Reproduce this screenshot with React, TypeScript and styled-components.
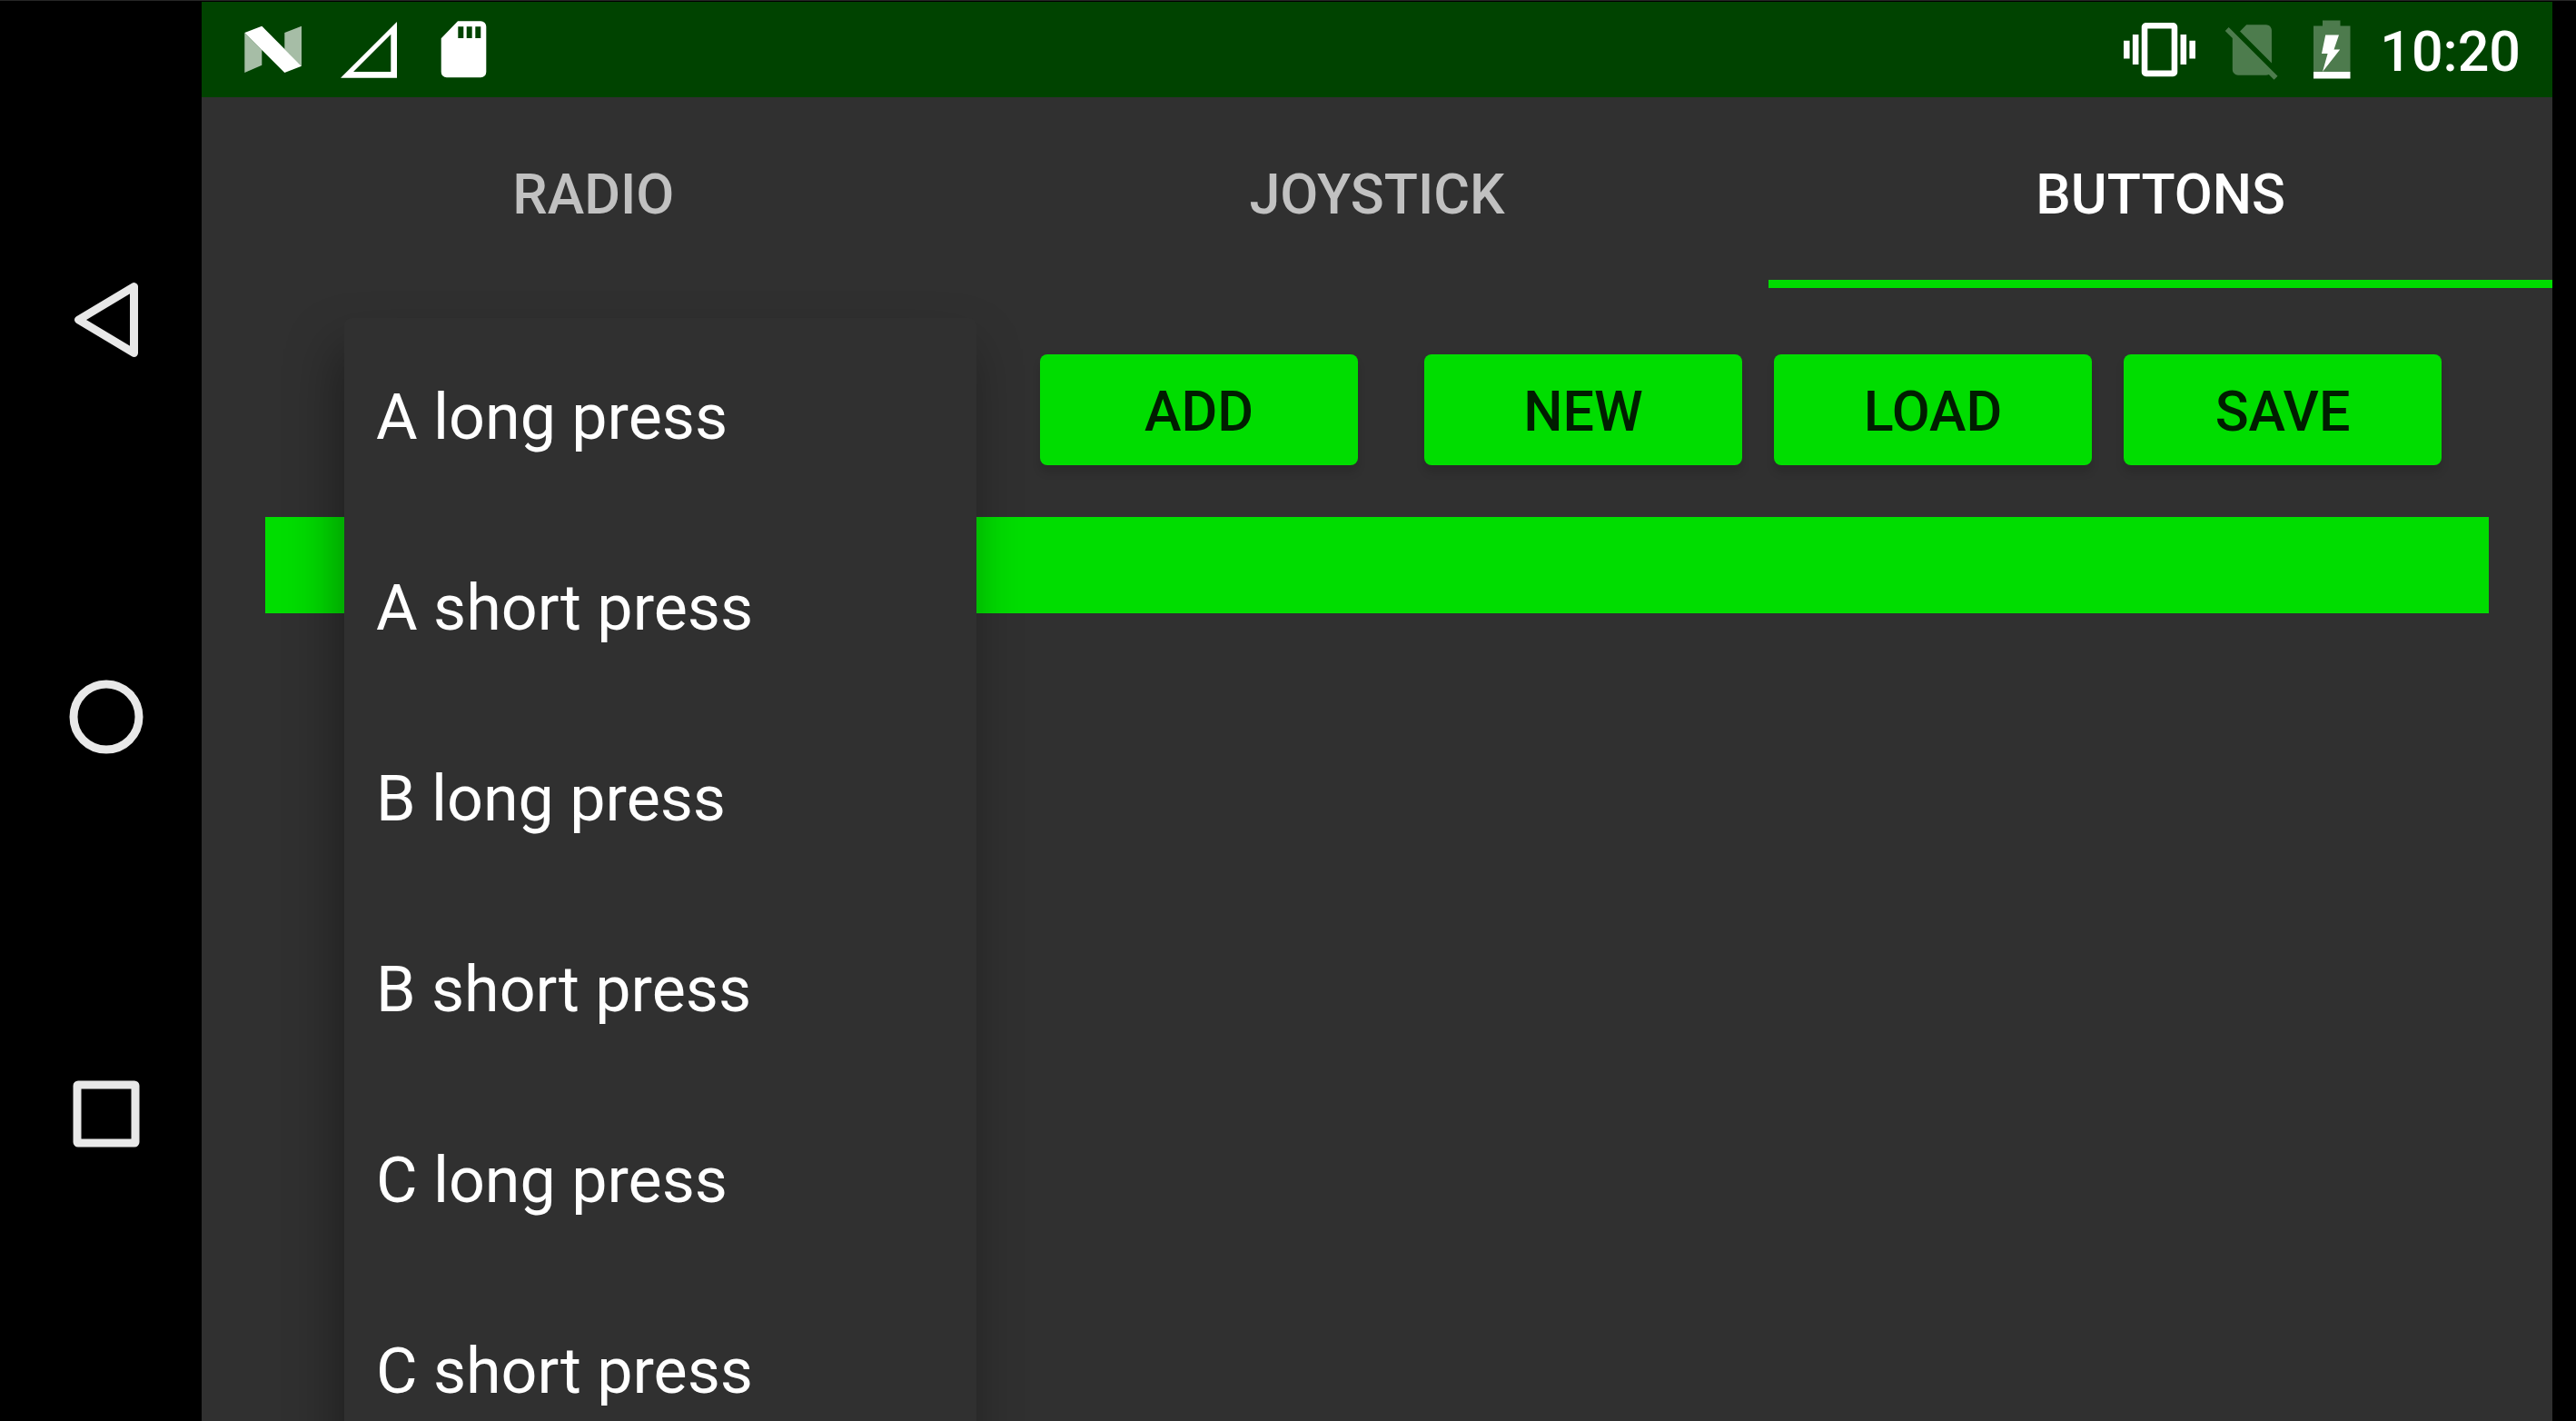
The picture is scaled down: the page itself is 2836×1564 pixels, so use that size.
import React, { useState } from "react";
import styled, { createGlobalStyle } from "styled-components";

const color = {
  surface: "#303030",
  accent: "#00dd00",
  status: "#004300",
  nav: "#e8e8e8",
};

const GlobalStyle = createGlobalStyle`
  * { box-sizing: border-box; }
  body {
    margin: 0;
    background: #000;
    font-family: Roboto, "Liberation Sans", sans-serif;
    overflow: hidden;
  }
  button { font-family: inherit; border: 0; cursor: pointer; }
`;

const Device = styled.div`
  display: grid;
  grid-template-columns: 222px minmax(0, 1fr) 26px;
  height: 100vh;
  padding-top: 1px;
  border-top: 1px solid #262626;
  overflow: hidden;
`;

const NavRail = styled.nav`
  display: flex;
  flex-direction: column;
  align-items: center;
  justify-content: space-between;
  padding: 308px 0 296px 12px;
`;

const NavButton = styled.button`
  display: block;
  width: 84px;
  height: 84px;
  padding: 0;
  background: none;
  svg {
    display: block;
    fill: none;
    stroke: ${color.nav};
    stroke-width: 9;
    stroke-linejoin: round;
  }
`;

const Screen = styled.div`
  display: flex;
  flex-direction: column;
  min-height: 0;
  background: ${color.surface};
`;

const StatusBar = styled.header`
  display: flex;
  align-items: center;
  justify-content: space-between;
  flex: none;
  height: 105px;
  padding: 0 35px 0 44px;
  background: ${color.status};
`;

const StatusGroup = styled.div<{ $gap: number }>`
  display: flex;
  align-items: center;
  gap: ${(p) => p.$gap}px;
  svg {
    display: block;
    fill: #fff;
  }
`;

const Clock = styled.time`
  padding-top: 4px;
  color: #fff;
  font-size: 61px;
  font-weight: 500;
  line-height: 72px;
`;

const Tabs = styled.div`
  display: grid;
  grid-template-columns: repeat(3, 1fr);
  flex: none;
  height: 210px;
`;

const Tab = styled.button<{ $active: boolean }>`
  padding: 12px 0 0;
  background: none;
  border-bottom: 9px solid ${(p) => (p.$active ? color.accent : "transparent")};
  color: ${(p) => (p.$active ? "#fff" : "#c1c1c1")};
  font-size: 61px;
  font-weight: 500;
  line-height: 72px;
  text-transform: uppercase;
`;

const Page = styled.main`
  flex: 1;
  min-height: 0;
  padding: 73px 70px 0;
`;

const Toolbar = styled.div`
  display: flex;
  padding: 0 52px 0 87px;
`;

const Spinner = styled.div`
  position: relative;
  flex: 1;
  min-width: 0;
  margin-right: 70px;
`;

const Popup = styled.ul`
  position: absolute;
  z-index: 1;
  top: -40px;
  left: 0;
  right: 0;
  margin: 0;
  padding: 4px 0;
  list-style: none;
  background: ${color.surface};
  border-radius: 8px;
  box-shadow: -8px 32px 56px rgba(0, 0, 0, 0.36);
`;

const Option = styled.button`
  display: block;
  width: 100%;
  height: 210px;
  padding: 0 35px;
  background: none;
  color: #fff;
  font-size: 70px;
  line-height: 82px;
  text-align: left;
  white-space: nowrap;
`;

const FileActions = styled.div`
  display: flex;
  gap: 35px;
  margin-left: 73px;
`;

const ActionButton = styled.button`
  width: 350px;
  height: 122px;
  padding: 4px 0 0;
  border-radius: 8px;
  background: ${color.accent};
  box-shadow: 0 8px 10px rgba(0, 0, 0, 0.12);
  color: rgba(0, 0, 0, 0.87);
  font-size: 61px;
  font-weight: 500;
  line-height: 72px;
  text-transform: uppercase;
`;

const Banner = styled.div`
  height: 106px;
  margin-top: 57px;
  background: ${color.accent};
`;

const NougatIcon = () => (
  <svg width="70" height="71" viewBox="0 0 70 71" aria-hidden="true">
    <path opacity=".65" d="M3.3 17 22.3 36V52.7L3.3 61ZM47.3 17 66 9.7V53.7L47.3 35Z" />
    <path d="M3.3 17 22.3 9.7 66 53.7 47.3 61Z" />
  </svg>
);

const SignalIcon = () => (
  <svg width="70" height="71" viewBox="0 0 70 71" aria-hidden="true">
    <path fillRule="evenodd" d="M4 66.7 66 5V66.7ZM18 60H59.3V18.7Z" />
  </svg>
);

const SdCardIcon = () => (
  <svg width="70" height="71" viewBox="0 0 70 71" aria-hidden="true">
    <path
      fillRule="evenodd"
      d="M28 4.3H53.3a6 6 0 0 1 6 6V60.3a6 6 0 0 1-6 6H15.7a6 6 0 0 1-6-6V23.3ZM28.3 10.3V23h6V10.3ZM37.7 10.3V23h6V10.3ZM47.3 10.3V23h6V10.3Z"
    />
  </svg>
);

const VibrateIcon = () => (
  <svg width="79" height="79" viewBox="0 0 24 24" aria-hidden="true">
    <path d="M0 15h2V9H0v6zm3 2h2V7H3v10zm19-8v6h2V9h-2zm-3 8h2V7h-2v10zM16.5 3h-9C6.67 3 6 3.67 6 4.5v15c0 .83.67 1.5 1.5 1.5h9c.83 0 1.5-.67 1.5-1.5v-15c0-.83-.67-1.5-1.5-1.5zM16 19H8V5h8v14z" />
  </svg>
);

const NoSimIcon = () => (
  <svg width="64" height="74" viewBox="2.14 0 20.76 24" opacity=".3" aria-hidden="true">
    <path d="M18.99 5c0-1.1-.89-2-1.99-2h-7L7.66 5.34 19 16.68 18.99 5zM3.65 3.88L2.38 5.15 5 7.77V19c0 1.1.9 2 2 2h10.01c.35 0 .67-.1.96-.26l1.88 1.88 1.27-1.27L3.65 3.88z" />
  </svg>
);

const BatteryIcon = () => (
  <svg width="43" height="65" viewBox="0 0 43 65" aria-hidden="true">
    <path opacity=".3" d="M12 .5H31.500V6.500H42.500V57H2V6.500H12Z" />
    <path d="M2 57H42.500V64.500H2ZM15.200 16.500H30L24.500 32.500H31.200L12 57 17.600 37H11Z" />
  </svg>
);

const options = [
  "A long press",
  "A short press",
  "B long press",
  "B short press",
  "C long press",
  "C short press",
];

const tabs = ["Radio", "Joystick", "Buttons"];

export default function App() {
  const [active, setActive] = useState("Buttons");
  const [chosen, setChosen] = useState("");

  return (
    <>
      <GlobalStyle />
      <Device>
        <NavRail aria-label="System">
          <NavButton aria-label="Back">
            <svg width="84" height="84" viewBox="0 0 84 84">
              <path d="M72.500 5.500V78.500L11.500 42Z" />
            </svg>
          </NavButton>
          <NavButton aria-label="Home">
            <svg width="84" height="84" viewBox="0 0 84 84">
              <circle cx="42" cy="42" r="36" />
            </svg>
          </NavButton>
          <NavButton aria-label="Recent apps">
            <svg width="84" height="84" viewBox="0 0 84 84">
              <rect x="10" y="10" width="64" height="64" rx="1" />
            </svg>
          </NavButton>
        </NavRail>
        <Screen>
          <StatusBar>
            <StatusGroup $gap={35}>
              <NougatIcon />
              <SignalIcon />
              <SdCardIcon />
            </StatusGroup>
            <StatusGroup $gap={32}>
              <VibrateIcon />
              <NoSimIcon />
              <BatteryIcon />
              <Clock>10:20</Clock>
            </StatusGroup>
          </StatusBar>
          <Tabs role="tablist">
            {tabs.map((tab) => (
              <Tab
                key={tab}
                role="tab"
                aria-selected={tab === active}
                $active={tab === active}
                onClick={() => setActive(tab)}
              >
                {tab}
              </Tab>
            ))}
          </Tabs>
          <Page>
            <Toolbar>
              <Spinner>
                <Popup role="listbox" aria-label="Button event">
                  {options.map((option) => (
                    <li key={option} role="presentation">
                      <Option
                        role="option"
                        aria-selected={option === chosen}
                        onClick={() => setChosen(option)}
                      >
                        {option}
                      </Option>
                    </li>
                  ))}
                </Popup>
              </Spinner>
              <ActionButton>Add</ActionButton>
              <FileActions>
                <ActionButton>New</ActionButton>
                <ActionButton>Load</ActionButton>
                <ActionButton>Save</ActionButton>
              </FileActions>
            </Toolbar>
            <Banner />
          </Page>
        </Screen>
      </Device>
    </>
  );
}
